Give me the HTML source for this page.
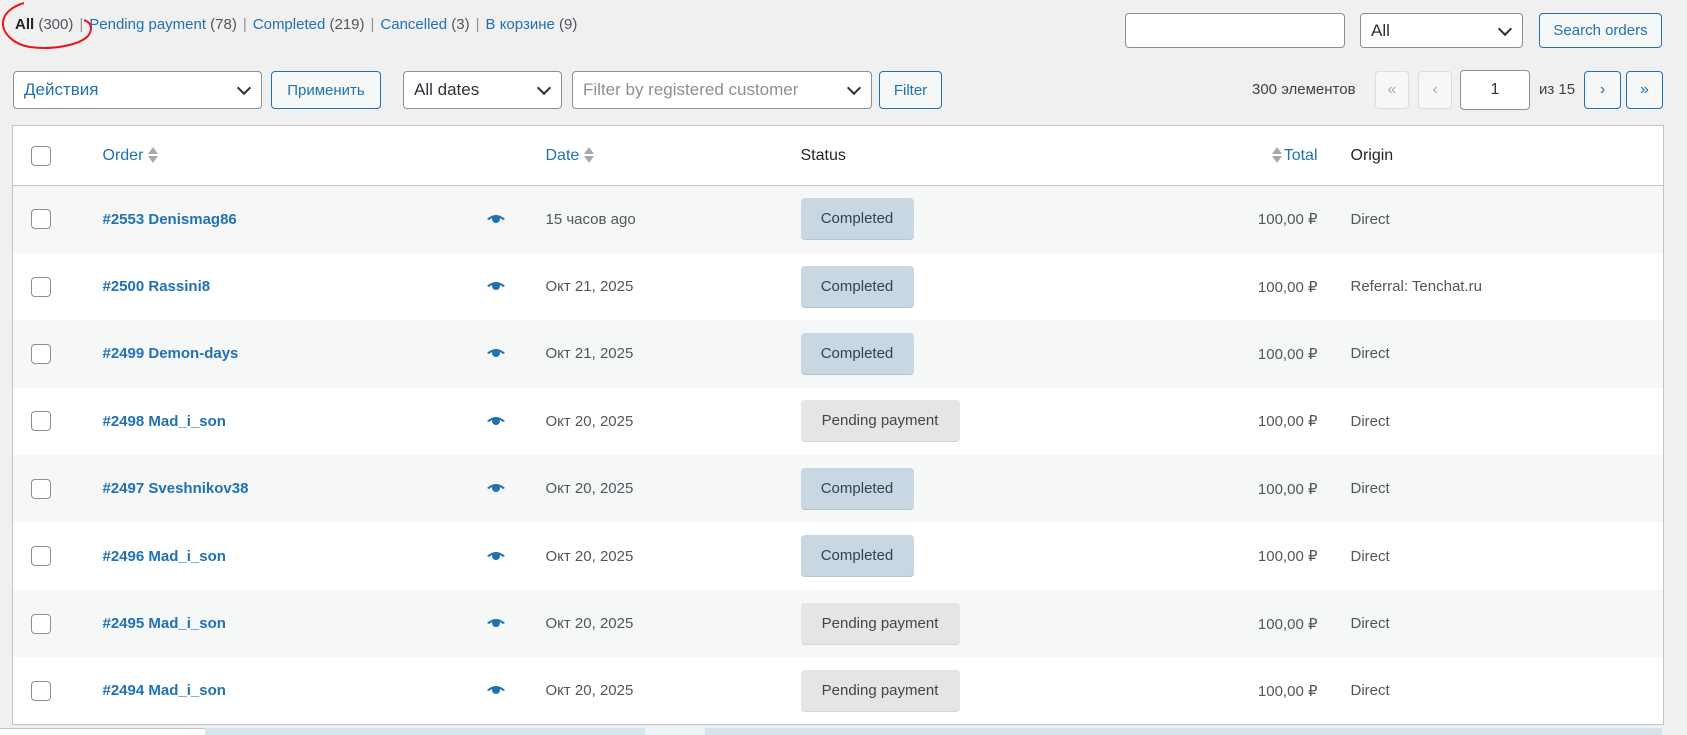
<!DOCTYPE html>
<html><head><meta charset="utf-8"><style>
*{box-sizing:border-box;margin:0;padding:0}
body{width:1687px;height:735px;overflow:hidden;background:#f0f0f1;font-family:"Liberation Sans","DejaVu Sans",sans-serif;color:#3c434a;position:relative}
.a{position:absolute}
a{color:#2271b1;text-decoration:none}
.tabs{left:15px;top:16px;font-size:15px;color:#50575e;white-space:nowrap}
.tabs .sep{color:#8c8f94;margin:0 6px}
.inp{background:#fff;border:1px solid #8c8f94;border-radius:4px}
.sel{background:#fff;border:1px solid #8c8f94;border-radius:4px;font-size:17px;padding-left:10px;display:flex;align-items:center;color:#2c3338}
.chev{position:absolute;right:12px;top:50%;width:10px;height:10px;border-right:2px solid #2c3338;border-bottom:2px solid #2c3338;transform:translateY(-70%) rotate(45deg)}
.btn{border:1px solid #2271b1;border-radius:4px;background:#f6f7f7;color:#2271b1;font-size:15px;display:flex;align-items:center;justify-content:center}
.pg{border:1px solid #dcdcde;border-radius:4px;background:#f6f7f7;color:#a7aaad;font-size:16px;display:flex;align-items:center;justify-content:center}
.pgb{border-color:#2271b1;color:#2271b1;background:#f6f7f7}
table{position:absolute;left:12px;top:125px;width:1652px;border-collapse:collapse;background:#fff;border:1px solid #c3c4c7;table-layout:fixed}
th{height:60px;text-align:left;font-weight:normal;font-size:16px;border-bottom:1px solid #c3c4c7;color:#1d2327}
td{height:67.4px;font-size:15px;color:#50575e}
tr.o td{background:#f6f7f7}
.cb{display:inline-block;width:20px;height:20px;border:1px solid #8c8f94;border-radius:4px;background:#fff;vertical-align:middle}
.bd{display:inline-flex;align-items:center;justify-content:center;height:42px;border-radius:4px;font-size:15px;vertical-align:middle}
.c{background:#c8d7e1;color:#2e4453;border-bottom:1px solid #b5c5d0;width:113px}
.p{background:#e5e5e5;color:#454545;border-bottom:1px solid #d4d4d4;width:159px}
.ord{color:#2271b1;font-weight:bold}
.sort{display:inline-block;vertical-align:middle;margin-left:5px;width:10px;height:16px;position:relative}
.sort:before{content:"";position:absolute;left:0;top:0;border:5px solid transparent;border-bottom:7px solid #a7aaad;border-top:0}
.sort:after{content:"";position:absolute;left:0;bottom:0;border:5px solid transparent;border-top:7px solid #a7aaad;border-bottom:0}
.t{text-align:right}
.or{padding-left:33px}
.c1{padding-left:18px}
</style></head><body>
<div class="a tabs"><b style="color:#1d2327">All</b> (300)<span class="sep">|</span><a>Pending payment</a> (78)<span class="sep">|</span><a>Completed</a> (219)<span class="sep">|</span><a>Cancelled</a> (3)<span class="sep">|</span><a>В корзине</a> (9)</div>
<svg class="a" style="left:0;top:0" width="100" height="52"><path d="M24 3 C14 6 4 12 3 22 C2 32 12 44 30 47 C50 50 78 46 88 36 C94 28 90 22 84 20" fill="none" stroke="#e8151b" stroke-width="2"/></svg>

<div class="a inp" style="left:1125px;top:13px;width:220px;height:35px"></div>
<div class="a sel" style="left:1360px;top:13px;width:163px;height:35px">All<span class="chev"></span></div>
<div class="a btn" style="left:1539px;top:13px;width:123px;height:35px">Search orders</div>

<div class="a sel" style="left:13px;top:71px;width:249px;height:38px;color:#2271b1">Действия<span class="chev"></span></div>
<div class="a btn" style="left:271px;top:71px;width:110px;height:38px">Применить</div>
<div class="a sel" style="left:403px;top:71px;width:159px;height:38px">All dates<span class="chev"></span></div>
<div class="a sel" style="left:572px;top:71px;width:300px;height:38px;color:#8c8f94">Filter by registered customer<span class="chev"></span></div>
<div class="a btn" style="left:879px;top:71px;width:63px;height:38px">Filter</div>

<div class="a" style="left:1252px;top:81px;font-size:15px;color:#3c434a">300 элементов</div>
<div class="a pg" style="left:1375px;top:71px;width:34px;height:38px">«</div>
<div class="a pg" style="left:1418px;top:71px;width:34px;height:38px">‹</div>
<div class="a inp" style="left:1460px;top:70px;width:70px;height:40px;display:flex;align-items:center;justify-content:center;font-size:16px;color:#2c3338">1</div>
<div class="a" style="left:1539px;top:81px;font-size:15px">из 15</div>
<div class="a pg pgb" style="left:1584px;top:71px;width:37px;height:38px">›</div>
<div class="a pg pgb" style="left:1626px;top:71px;width:37px;height:38px">»</div>

<table>
<colgroup><col style="width:90px"><col style="width:384px"><col style="width:59px"><col style="width:255px"><col style="width:367px"><col style="width:150px"><col></colgroup>
<tr><th class="c1"><span class="cb"></span></th><th colspan="2"><a>Order</a><span class="sort"></span></th><th><a>Date</a><span class="sort"></span></th><th>Status</th><th class="t"><span class="sort" style="margin:0 2px 0 0"></span><a>Total</a></th><th class="or">Origin</th></tr>
<tr class="o"><td class="c1"><span class="cb"></span></td><td><span class="ord">#2553 Denismag86</span></td><td><svg width="18" height="10"><path d="M0 5 Q9 -3 18 5 L16 6 Q9 0 2 6Z" fill="#2271b1"/><circle cx="9" cy="5" r="4" fill="#2271b1"/></svg></td><td>15 часов ago</td><td><span class="bd c">Completed</span></td><td class="t">100,00 ₽</td><td class="or">Direct</td></tr>
<tr><td class="c1"><span class="cb"></span></td><td><span class="ord">#2500 Rassini8</span></td><td><svg width="18" height="10"><path d="M0 5 Q9 -3 18 5 L16 6 Q9 0 2 6Z" fill="#2271b1"/><circle cx="9" cy="5" r="4" fill="#2271b1"/></svg></td><td>Окт 21, 2025</td><td><span class="bd c">Completed</span></td><td class="t">100,00 ₽</td><td class="or">Referral: Tenchat.ru</td></tr>
<tr class="o"><td class="c1"><span class="cb"></span></td><td><span class="ord">#2499 Demon-days</span></td><td><svg width="18" height="10"><path d="M0 5 Q9 -3 18 5 L16 6 Q9 0 2 6Z" fill="#2271b1"/><circle cx="9" cy="5" r="4" fill="#2271b1"/></svg></td><td>Окт 21, 2025</td><td><span class="bd c">Completed</span></td><td class="t">100,00 ₽</td><td class="or">Direct</td></tr>
<tr><td class="c1"><span class="cb"></span></td><td><span class="ord">#2498 Mad_i_son</span></td><td><svg width="18" height="10"><path d="M0 5 Q9 -3 18 5 L16 6 Q9 0 2 6Z" fill="#2271b1"/><circle cx="9" cy="5" r="4" fill="#2271b1"/></svg></td><td>Окт 20, 2025</td><td><span class="bd p">Pending payment</span></td><td class="t">100,00 ₽</td><td class="or">Direct</td></tr>
<tr class="o"><td class="c1"><span class="cb"></span></td><td><span class="ord">#2497 Sveshnikov38</span></td><td><svg width="18" height="10"><path d="M0 5 Q9 -3 18 5 L16 6 Q9 0 2 6Z" fill="#2271b1"/><circle cx="9" cy="5" r="4" fill="#2271b1"/></svg></td><td>Окт 20, 2025</td><td><span class="bd c">Completed</span></td><td class="t">100,00 ₽</td><td class="or">Direct</td></tr>
<tr><td class="c1"><span class="cb"></span></td><td><span class="ord">#2496 Mad_i_son</span></td><td><svg width="18" height="10"><path d="M0 5 Q9 -3 18 5 L16 6 Q9 0 2 6Z" fill="#2271b1"/><circle cx="9" cy="5" r="4" fill="#2271b1"/></svg></td><td>Окт 20, 2025</td><td><span class="bd c">Completed</span></td><td class="t">100,00 ₽</td><td class="or">Direct</td></tr>
<tr class="o"><td class="c1"><span class="cb"></span></td><td><span class="ord">#2495 Mad_i_son</span></td><td><svg width="18" height="10"><path d="M0 5 Q9 -3 18 5 L16 6 Q9 0 2 6Z" fill="#2271b1"/><circle cx="9" cy="5" r="4" fill="#2271b1"/></svg></td><td>Окт 20, 2025</td><td><span class="bd p">Pending payment</span></td><td class="t">100,00 ₽</td><td class="or">Direct</td></tr>
<tr><td class="c1"><span class="cb"></span></td><td><span class="ord">#2494 Mad_i_son</span></td><td><svg width="18" height="10"><path d="M0 5 Q9 -3 18 5 L16 6 Q9 0 2 6Z" fill="#2271b1"/><circle cx="9" cy="5" r="4" fill="#2271b1"/></svg></td><td>Окт 20, 2025</td><td><span class="bd p">Pending payment</span></td><td class="t">100,00 ₽</td><td class="or">Direct</td></tr>
</table>
<div class="a" style="left:0;top:728px;width:205px;height:7px;background:#fff;border-top:1px solid #c3c4c7"></div>
<div class="a" style="left:205px;top:728px;width:440px;height:7px;background:#d3e6ee"></div>
<div class="a" style="left:645px;top:728px;width:60px;height:7px;background:#eef3f5"></div>
<div class="a" style="left:705px;top:728px;width:957px;height:7px;background:#d7e3ec"></div>
</body></html>
